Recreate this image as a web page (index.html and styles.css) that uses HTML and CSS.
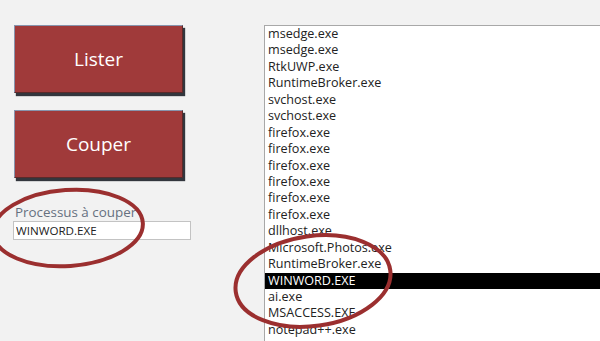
FILE: index.html
```html
<!DOCTYPE html>
<html lang="fr">
<head>
  <meta charset="UTF-8">
  <title>Processus</title>
  <link rel="stylesheet" href="styles.css">
</head>
<body>
  <div class="form">
    <div class="form-left">
      <button class="form-btn">Lister</button>
      <button class="form-btn">Couper</button>

      <div class="field">
        <label class="field-label" for="field-input">Processus à couper</label>
        <input class="field-input" id="field-input" value="WINWORD.EXE">
      </div>
    </div>

    <div class="list">
      <div class="list-item">msedge.exe</div>
      <div class="list-item">msedge.exe</div>
      <div class="list-item">RtkUWP.exe</div>
      <div class="list-item">RuntimeBroker.exe</div>
      <div class="list-item">svchost.exe</div>
      <div class="list-item">svchost.exe</div>
      <div class="list-item">firefox.exe</div>
      <div class="list-item">firefox.exe</div>
      <div class="list-item">firefox.exe</div>
      <div class="list-item">firefox.exe</div>
      <div class="list-item">firefox.exe</div>
      <div class="list-item">firefox.exe</div>
      <div class="list-item">dllhost.exe</div>
      <div class="list-item">Microsoft.Photos.exe</div>
      <div class="list-item">RuntimeBroker.exe</div>
      <div class="list-item selected">WINWORD.EXE</div>
      <div class="list-item">ai.exe</div>
      <div class="list-item">MSACCESS.EXE</div>
      <div class="list-item">notepad++.exe</div>
    </div>
  </div>

  <!-- annotation circles drawn over the form -->
  <svg class="marks" width="600" height="341" viewBox="0 0 600 341">
    <ellipse cx="68" cy="228" rx="75" ry="38" transform="rotate(-4 68 228)" />
    <ellipse cx="313" cy="281" rx="78" ry="45" transform="rotate(-8 313 281)" />
  </svg>
</body>
</html>
```

FILE: styles.css
```css
html, body {
  margin: 0;
  height: 100%;
  overflow: hidden;
}

body {
  background: #f2f2f2;
  font-family: "Open Sans", "Noto Sans", sans-serif;
  position: relative;
}

.form {
  display: flex;
  box-sizing: border-box;
  height: 100vh;
  padding-top: 25px;
  overflow: hidden;
}

.form-left {
  width: 250px;
  padding-left: 14px;
  display: flex;
  flex-direction: column;
  align-items: flex-start;
}

.form-btn {
  width: 169px;
  height: 68px;
  margin-bottom: 17px;
  background: #a03a3a;
  color: #fff;
  font-family: "Open Sans", sans-serif;
  font-size: 19px;
  border: 1px solid #8794ad;
  border-right-color: #5a2a2a;
  border-bottom-color: #5a2a2a;
  box-shadow: 2px 3px 1px #33363d;
  padding: 0;
  cursor: pointer;
}

.field {
  display: flex;
  flex-direction: column;
  margin-top: 9px;
}

.field-label {
  color: #66707f;
  font-size: 13.4px;
  line-height: 17px;
  padding-left: 1px;
}

.field-input {
  width: 172px;
  height: 17px;
  margin: 0 0 0 -1px;
  padding: 0 2px;
  border: 1px solid #c3c3c3;
  background: #fff;
  font-family: "Open Sans", sans-serif;
  font-size: 11.6px;
  color: #222;
}

.list {
  flex: 1;
  margin-right: -2px;
  margin-bottom: -10px;
  background: #fff;
  border: 1px solid #a8a8a8;
}

.list-item {
  font-size: 12.6px;
  line-height: 16.45px;
  height: 16.45px;
  padding-left: 3px;
  color: #222;
  white-space: nowrap;
}

.list-item.selected {
  background: #000;
  color: #fff;
}

.marks {
  position: absolute;
  left: 0;
  top: 0;
  pointer-events: none;
}

.marks ellipse {
  fill: none;
  stroke: #9b2f2f;
  stroke-width: 4;
}
```
